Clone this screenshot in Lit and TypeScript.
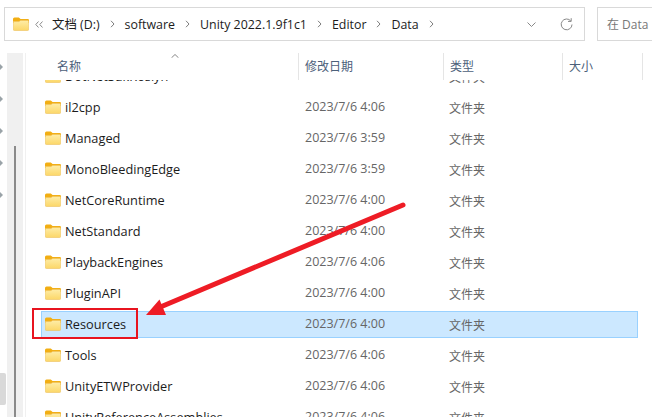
import { LitElement, html, css, svg } from "lit";
import { customElement } from "lit/decorators.js";

const rows: [string, string, boolean?][] = [
  ["il2cpp", "2023/7/6 4:06"],
  ["Managed", "2023/7/6 3:59"],
  ["MonoBleedingEdge", "2023/7/6 3:59"],
  ["NetCoreRuntime", "2023/7/6 4:00"],
  ["NetStandard", "2023/7/6 4:00"],
  ["PlaybackEngines", "2023/7/6 4:06"],
  ["PluginAPI", "2023/7/6 4:00"],
  ["Resources", "2023/7/6 4:00", true],
  ["Tools", "2023/7/6 4:06"],
  ["UnityETWProvider", "2023/7/6 4:06"],
  ["UnityReferenceAssemblies", "2023/7/6 4:06"],
];

const folder = () => svg`<svg class="folder" width="16" height="14" viewBox="0 0 16 14">
  <defs><linearGradient id="fb" x1="0" y1="0" x2="0" y2="1"><stop offset="0" stop-color="#feeda8"/><stop offset="1" stop-color="#fcd768"/></linearGradient></defs>
  <path d="M0 2 Q0 .5 1.5 .5 H5.8 L7.6 2 H14.8 Q16 2 16 3.2 V6 H0Z" fill="#f2ae13"/>
  <path d="M.3 4.6 H6 L7.6 3.4 H14.6 Q15.7 3.4 15.7 4.5 V12.4 Q15.7 13.5 14.6 13.5 H1.4 Q.3 13.5 .3 12.4Z" fill="url(#fb)" stroke="#ecc15f" stroke-width=".6"/>
</svg>`;

const sep = () => svg`<svg class="sep" width="5" height="8" viewBox="0 0 5 8"><path d="M1 .8 L4 4 L1 7.2" fill="none" stroke="#7d7d7d" stroke-width="1"/></svg>`;

@customElement("app-root")
export class AppRoot extends LitElement {
  static styles = css`
    :host { display: block; width: 652px; height: 417px; overflow: hidden; background: #fff; position: relative;
      font-family: "Noto Sans CJK SC", "Open Sans", sans-serif; font-size: 12px; color: #1c1c1c; }
    .toolbar { display: flex; height: 34px; padding: 7px 0 0 4px; gap: 12px; }
    .addr { flex: none; width: 581px; height: 34px; box-sizing: border-box; border: 1px solid #d9d9d9; background: #fff;
      display: flex; align-items: center; padding-left: 8px; font: 12.4px "Open Sans", "Noto Sans CJK SC", sans-serif; }
    .addr .folder { margin-right: 6px; }
    .lt { flex: none; width: 8px; margin-right: 9px; }
    .crumb { white-space: nowrap; }
    .sep { flex: none; margin: 0 10px; }
    .spacer { flex: 1; }
    .chev { margin-right: 24px; }
    .ref { margin-right: 11px; }
    .search { flex: 1; height: 34px; box-sizing: border-box; border: 1px solid #d9d9d9; border-right: none; padding-left: 9px;
      display: flex; align-items: center; color: #777; font: 12px "Open Sans", "Noto Sans CJK SC", sans-serif; white-space: nowrap; overflow: hidden; }
    .body { display: flex; height: 364px; margin-top: 12px; }
    .nav { width: 6px; margin-right: 1px; display: flex; flex-direction: column; align-items: flex-start; gap: 26px; padding-top: 11px; box-sizing: border-box; }
    .tri { flex: none; width: 0; height: 0; border-left: 3px solid #9aa3a8; border-top: 3px solid transparent; border-bottom: 3px solid transparent; }
    .navsel { flex: none; width: 6px; height: 32px; margin-top: 149px; background: #d9d9d9; border-radius: 0 2px 2px 0; }
    .track { width: 16px; flex: none; background: #f0f0f0; display: flex; flex-direction: column; align-items: flex-start; padding-top: 93px; box-sizing: border-box; margin-right: 2px; }
    .thumb { margin-left: 7px; width: 2px; flex: 1; background: #8a8a8a; }
    .list { flex: 1; min-width: 0; border-left: 1px solid #f0f0f0; }
    .head { display: grid; grid-template-columns: 273px 145px 119px 80px; height: 27px; }
    .head > div { color: #4c607a; padding: 0 0 2px 6px; display: flex; align-items: center; height: 27px; box-sizing: border-box; border-right: 1px solid #e5e5e5; position: relative; }
    .head .name { padding-left: 31px; }
    .head .caret { position: absolute; left: 145px; top: 1px; }
    .rows { height: 337px; overflow: hidden; }
    .row { display: flex; align-items: center; box-sizing: border-box; height: 27px; margin: 0 0 4px 15px; width: 597px; padding-left: 3px; border: 1px solid transparent; }
    .row .n { width: 240px; flex: none; font: 12.75px "Open Sans", sans-serif; color: #1c1c1c; white-space: nowrap; margin: 0 0 2px 4px; }
    .row .folder { flex: none; margin-bottom: 1px; }
    .row .d { width: 144px; flex: none; color: #666; font: 12.5px "Open Sans", sans-serif; white-space: nowrap; margin-bottom: 2px; }
    .row .t { color: #666; font-size: 12px; margin-bottom: 1px; }
    .row.sel { background: #cce8ff; border-color: #99d1ff; }
    .cut { height: 10px; overflow: hidden; margin-bottom: 4px; }
    .cut .row { margin-top: -17px; }
    .overlay { position: absolute; left: 0; top: 0; pointer-events: none; }
  `;

  render() {
    return html`
      <div class="toolbar">
        <div class="addr">
          ${folder()}
          <svg class="lt" width="8" height="7" viewBox="0 0 8 7"><path d="M3.5 .5 L.8 3.5 L3.5 6.5 M7.5 .5 L4.8 3.5 L7.5 6.5" fill="none" stroke="#8a8a8a" stroke-width="1"/></svg>
          <span class="crumb">文档 (D:)</span>${sep()}
          <span class="crumb">software</span>${sep()}
          <span class="crumb">Unity 2022.1.9f1c1</span>${sep()}
          <span class="crumb">Editor</span>${sep()}
          <span class="crumb">Data</span>${sep()}
          <span class="spacer"></span>
          <svg class="chev" width="9" height="5" viewBox="0 0 9 5"><path d="M.5 .5 L4.5 4.5 L8.5 .5" fill="none" stroke="#888" stroke-width="1"/></svg>
          <svg class="ref" width="13" height="13" viewBox="0 0 13 13"><path d="M10.8 3 A5.4 5.4 0 1 0 12 6.5" fill="none" stroke="#888" stroke-width="1"/><path d="M11.2 .2 V3.4 H8" fill="none" stroke="#888" stroke-width="1"/></svg>
        </div>
        <div class="search">在 Data</div>
      </div>
      <div class="body">
        <div class="nav">
          <span class="tri"></span><span class="tri"></span><span class="tri"></span><span class="tri"></span><span class="tri"></span>
          <span class="navsel"></span>
        </div>
        <div class="track"><div class="thumb"></div></div>
        <div class="list">
          <div class="head">
            <div class="name">名称<svg class="caret" width="8" height="4" viewBox="0 0 8 4"><path d="M.5 3.8 L4 .5 L7.5 3.8" fill="none" stroke="#888"/></svg></div>
            <div>修改日期</div><div>类型</div><div>大小</div>
          </div>
          <div class="rows">
            <div class="cut"><div class="row">${folder()}<span class="n">DotNetSdkRoslyn</span><span class="d">2023/7/6 3:59</span><span class="t">文件夹</span></div></div>
            ${rows.map(([n, d, s]) => html`
              <div class="row ${s ? "sel" : ""}">
                ${folder()}<span class="n">${n}</span><span class="d">${d}</span><span class="t">文件夹</span>
              </div>`)}
          </div>
        </div>
      </div>
      <svg class="overlay" width="652" height="417" viewBox="0 0 652 417">
        <rect x="33" y="309" width="104" height="29" fill="none" stroke="#e8141f" stroke-width="2"/>
        <path d="M403 205 L158 308" stroke="#ee1c25" stroke-width="5" stroke-linecap="round" fill="none"/>
        <path d="M146 315 L159.5 299.5 L166 315Z" fill="#ee1c25"/>
      </svg>
    `;
  }
}
